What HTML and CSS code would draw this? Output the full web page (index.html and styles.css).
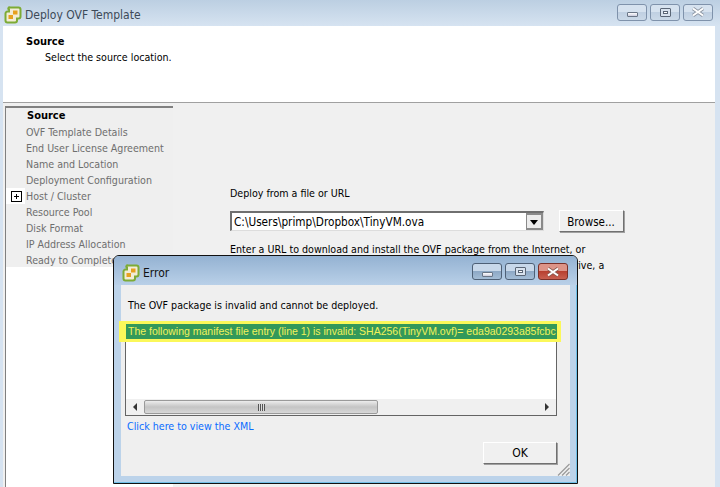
FILE: index.html
```html
<!DOCTYPE html>
<html lang="en">
<head>
<meta charset="utf-8">
<title>Deploy OVF Template</title>
<link rel="stylesheet" href="styles.css">
</head>
<body>
<div class="window">
  <div class="titlebar">
    <svg class="appicon" viewBox="0 0 18 18"><path d="M6 1.500h8.500a2 2 0 0 1 2 2v7a2 2 0 0 1-2 2H13v2a2 2 0 0 1-2 2H3.500a2 2 0 0 1-2-2v-7a2 2 0 0 1 2-2H5v-2a1 1 0 0 1 1-2z" fill="#f2ecd6" stroke="#7dab35" stroke-width="2"/><path d="M9 4.500h4.500v4H9zM4.500 9H9v4H4.500z" fill="#e6a11f"/></svg>
    <span class="title">Deploy OVF Template</span>
    <div class="controls">
      <span class="ctl"><i class="min"></i></span>
      <span class="ctl"><i class="max"></i></span>
      <span class="ctl"><svg class="x" viewBox="0 0 14 10"><path d="M2 1.500l10 7M12 1.500l-10 7" stroke="#8a93a0" stroke-width="3.500"/><path d="M2 1.500l10 7M12 1.500l-10 7" stroke="#fff" stroke-width="2"/></svg></span>
    </div>
  </div>
  <div class="head">
    <div class="head-title">Source</div>
    <div class="head-sub">Select the source location.</div>
  </div>
  <div class="body">
    <div class="side">
      <ul class="steps">
        <li class="cur">Source</li>
        <li>OVF Template Details</li>
        <li>End User License Agreement</li>
        <li>Name and Location</li>
        <li>Deployment Configuration</li>
        <li class="tree"><span class="plus"></span>Host / Cluster</li>
        <li>Resource Pool</li>
        <li>Disk Format</li>
        <li>IP Address Allocation</li>
        <li>Ready to Complete</li>
      </ul>
    </div>
    <div class="main">
      <div class="lbl">Deploy from a file or URL</div>
      <div class="row">
        <div class="combo"><span class="val">C:\Users\primp\Dropbox\TinyVM.ova</span><span class="drop"></span></div>
        <div class="btn browse">Browse...</div>
      </div>
      <div class="para">Enter a URL to download and install the OVF package from the Internet, or<br>specify a location accessible from your computer, such as a local hard drive, a</div>
    </div>
  </div>
</div>
<div class="dialog">
  <div class="titlebar dtitle">
    <svg class="appicon" viewBox="0 0 18 18"><path d="M6 1.500h8.500a2 2 0 0 1 2 2v7a2 2 0 0 1-2 2H13v2a2 2 0 0 1-2 2H3.500a2 2 0 0 1-2-2v-7a2 2 0 0 1 2-2H5v-2a1 1 0 0 1 1-2z" fill="#f2ecd6" stroke="#7dab35" stroke-width="2"/><path d="M9 4.500h4.500v4H9zM4.500 9H9v4H4.500z" fill="#e6a11f"/></svg>
    <span class="title">Error</span>
    <div class="controls">
      <span class="ctl d"><i class="min"></i></span>
      <span class="ctl d"><i class="max"></i></span>
      <span class="ctl d red"><svg class="x" viewBox="0 0 14 10"><path d="M2 1.500l10 7M12 1.500l-10 7" stroke="#8a5a50" stroke-width="3.500"/><path d="M2 1.500l10 7M12 1.500l-10 7" stroke="#fff" stroke-width="2"/></svg></span>
    </div>
  </div>
  <div class="dbody">
    <div class="msg">The OVF package is invalid and cannot be deployed.</div>
    <div class="hl">
      <div class="sel">The following manifest file entry (line 1) is invalid: SHA256(TinyVM.ovf)= eda9a0293a85fcbc</div>
    </div>
    <div class="lbwrap">
      <div class="blank"></div>
      <div class="scroll">
        <svg class="arr" viewBox="0 0 6 8"><path d="M5 0v8L1 4z" fill="#333"/></svg>
        <div class="thumb"><span></span></div>
        <svg class="arr end" viewBox="0 0 6 8"><path d="M1 0v8l4-4z" fill="#333"/></svg>
      </div>
    </div>
    <a class="link">Click here to view the XML</a>
    <div class="foot"><div class="btn ok">OK</div></div>
    <svg class="grip" viewBox="0 0 13 13"><path d="M12.500 1L1 12.500M12.500 5L5 12.500M12.500 9L9 12.500" stroke="#9a9a9a" stroke-width="1.200"/></svg>
  </div>
</div>
</body>
</html>
```
FILE: styles.css
```css
* { box-sizing: border-box; }
html, body { margin: 0; padding: 0; }
body {
  width: 720px; height: 487px; overflow: hidden; position: relative;
  font-family: "DejaVu Sans Condensed", "DejaVu Sans", sans-serif;
  font-size: 10.6px; color: #000; background: #f0f0f0;
}
.window {
  width: 720px; height: 487px; display: flex; flex-direction: column;
  background: #d6e3f1; padding: 0 5px 0 3px;
}
.titlebar {
  height: 26px; flex: none; display: flex; align-items: center;
  margin: 0 -5px 0 -3px; padding: 3px 7px 0 4px;
  background: linear-gradient(#bccfe2, #d6e3f1);
}
.appicon { width: 18px; height: 18px; flex: none; margin-right: 3px; }
.title { font-size: 12px; color: #3d4a58; flex: 1; }
.controls { display: flex; gap: 3px; margin-top: -5px; }
.ctl {
  width: 30px; height: 17px; border: 1px solid #7f92ab; border-radius: 3px;
  background: linear-gradient(#d6e2ef 45%, #c0d0e2 50%, #cbd9e8);
  display: flex; align-items: center; justify-content: center;
}
.min { display: block; width: 11px; height: 5px; margin-top: 5px; background: linear-gradient(#fff,#ccd); border: 1px solid #6a7686; border-radius: 1px; }
.max { display: block; width: 11px; height: 9px; background: #fff; border: 1px solid #5a6676; border-radius: 1px; box-shadow: inset 0 0 0 2px #d8e2ee, inset 0 0 0 3px #5a6676; }
.x { width: 14px; height: 10px; }
.head { height: 76px; flex: none; background: #fff; padding: 9px 0 0 23px; }
.head-title { font-weight: bold; font-size: 11px; line-height: 14px; }
.head-sub { line-height: 16px; margin: 0 0 0 19px; }
.body { flex: 1; display: flex; background: #f0f0f0; border-top: 1px solid #a0a0a0; padding: 3px 0 0 2px; }
.side { width: 168px; flex: none; background: #fff; border-left: 1px solid #808080; }
.steps { list-style: none; margin: 0; padding: 0; background: #efefef; border-top: 2px solid #808080; height: 161px; }
.steps li { height: 16px; line-height: 16px; padding-left: 20px; color: #6e6e6e; white-space: nowrap; position: relative; }
.steps li.cur { color: #000; font-weight: bold; font-size: 11px; padding-left: 21px; }
.plus { position: absolute; left: 0; top: 0; width: 19px; height: 16px; background: #fff; }
.plus::before { content: ""; position: absolute; left: 5px; top: 3px; width: 9px; height: 9px; border: 1px solid #000;
  background: linear-gradient(#000,#000) center/5px 1px no-repeat, linear-gradient(#000,#000) center/1px 5px no-repeat; }
.main { flex: 1; padding: 80px 0 0 57px; }
.lbl { line-height: 14px; }
.row { display: flex; align-items: flex-start; margin-top: 10px; }
.combo { width: 314px; height: 20px; margin-top: 1px; border: 2px solid #6f6f6f; border-right: 1px solid #ddd; border-bottom: 1px solid #ddd; background: #fff; display: flex; align-items: center; justify-content: space-between; padding-left: 2px; }
.val { font-size: 11.7px; }
.drop { width: 17px; height: 17px; background: #ececec; position: relative; border: 2px solid #8a8a8a; border-left-width: 1px; }
.drop::after { content: ""; position: absolute; left: 3px; top: 5px; border: 4px solid transparent; border-top: 5px solid #000; border-bottom: 0; }
.btn { background: #f0f0f0; border: 1px solid #fff; border-right-color: #707070; border-bottom-color: #707070; box-shadow: 1px 1px 0 #a0a0a0; text-align: center; }
.browse { width: 65px; height: 22px; line-height: 22px; margin-left: 15px; font-size: 11.5px; padding-right: 1px; }
.para { margin-top: 9px; line-height: 16px; white-space: nowrap; }
.dialog {
  position: absolute; left: 113px; top: 255px; width: 465px; height: 229px;
  border: 1px solid #111; border-radius: 6px 6px 0 0; background: #bcd3ea; display: flex; flex-direction: column;
  padding: 0 7px 7px 7px; box-shadow: inset -1px -1px 0 #6fc0e8;
}
.dtitle { height: 29px; margin: 0 -7px; padding: 4px 9px 0 8px; background: linear-gradient(#94b2d2, #b9d0e8); border-radius: 5px 5px 0 0; }
.dtitle .title { color: #111; font-size: 12px; }
.ctl.d { border-color: #4e6076; background: linear-gradient(#c8d8ea 45%, #8ea9c6 50%, #a4bdd6); }
.ctl.red { border-color: #7a3028; background: linear-gradient(#dd9488 45%, #b84030 50%, #c86050); }
.dtitle .controls { margin-top: -2px; }
.dbody { flex: 1; background: #efefef; position: relative; padding: 0 0 0 4px; }
.msg { margin-top: 12px; line-height: 16px; padding-left: 3px; }
.hl { background: #fbf85a; margin: 8px 9px 0 -6px; height: 21px; padding: 3px 4px 0 7px; }
.sel { background: #33995a; color: #f2f25a; height: 15px; line-height: 15px; overflow: hidden; white-space: nowrap; padding-left: 2px; font-family: "Liberation Sans", sans-serif; font-size: 10.5px; }
.lbwrap { margin: 0 13px 0 0; height: 74px; border: 1px solid #646464; border-top: 0; background: #fff; display: flex; flex-direction: column; justify-content: flex-end; }
.blank { flex: 1; }
.scroll { height: 16px; background: #f0f0f0; display: flex; align-items: center; padding: 0 6px; gap: 6px; }
.arr { width: 6px; height: 8px; flex: none; }
.arr.end { margin-left: auto; }
.thumb { width: 234px; flex: none; height: 14px; border: 1px solid #9a9a9a; border-radius: 2px; background: linear-gradient(#ececec, #c4c4c4 50%, #d8d8d8); display: flex; justify-content: center; align-items: center; }
.thumb span { width: 7px; height: 7px; background: repeating-linear-gradient(90deg,#555 0 1px,#ddd 1px 2px); }
.link { display: block; color: #0a6cff; line-height: 16px; margin-top: 2px; padding-left: 2px; }
.foot { display: flex; justify-content: flex-end; padding-right: 13px; margin-top: 8px; }
.ok { width: 74px; height: 22px; line-height: 21px; font-size: 12px; }
.grip { position: absolute; right: 0; bottom: 0; width: 13px; height: 13px; }
```
